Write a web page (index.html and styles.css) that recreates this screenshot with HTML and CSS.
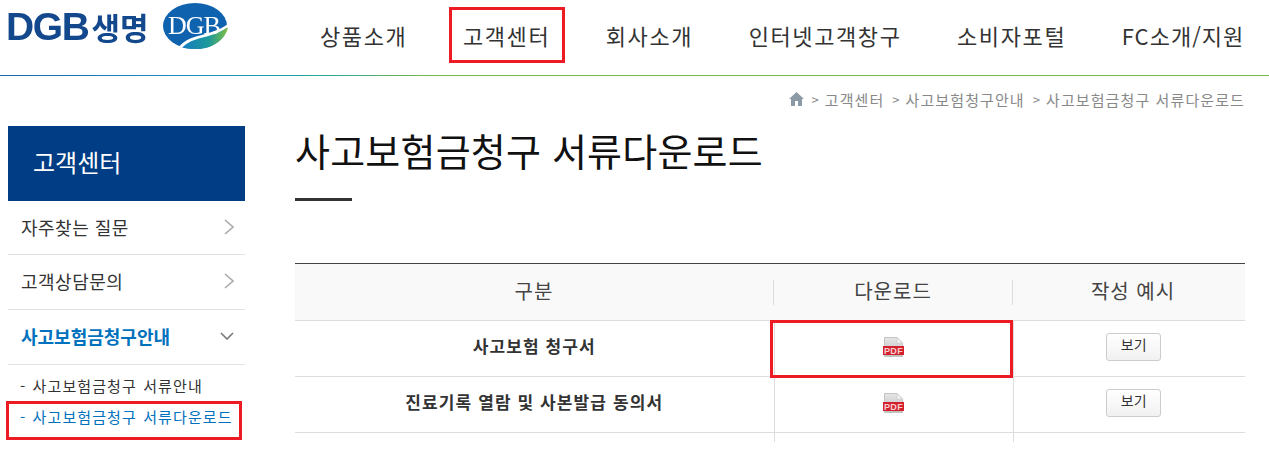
FILE: index.html
```html
<!DOCTYPE html>
<html lang="ko">
<head>
  <meta charset="UTF-8">
  <title>사고보험금청구 서류다운로드</title>
  <link rel="stylesheet" href="styles.css">
</head>
<body>
  <header class="header">
    <div class="logo">
      <span class="logo-text">DGB<span class="logo-kr">생명</span></span>
      <svg class="logo-mark" width="67" height="47" viewBox="0 0 67 47">
        <defs>
          <linearGradient id="swoosh" x1="0" y1="0" x2="1" y2="0">
            <stop offset="0" stop-color="#1379c4"/>
            <stop offset="0.6" stop-color="#1d9a9a"/>
            <stop offset="1" stop-color="#7fbf3f"/>
          </linearGradient>
        </defs>
        <ellipse cx="33" cy="23" rx="32" ry="23" fill="#0f62ae"/>
        <path d="M18 44 C30 31 50 36 66 24 C64 36 50 47 33 46 C27 46 22 45 18 44 Z" fill="url(#swoosh)"/>
        <path d="M17 44 C28 30 48 34 66 21 L66 24 C50 36 30 33 20 45 Z" fill="#fff"/>
        <text x="32" y="31" text-anchor="middle" class="logo-mark-text">DGB</text>
      </svg>
    </div>
    <nav class="nav">
      <a href="#">상품소개</a>
      <a href="#" class="marked">고객센터</a>
      <a href="#">회사소개</a>
      <a href="#">인터넷고객창구</a>
      <a href="#">소비자포털</a>
      <a href="#" class="fc">FC소개/지원</a>
    </nav>
  </header>
  <div class="header-line"></div>

  <div class="breadcrumb">
    <svg width="15" height="14" viewBox="0 0 15 14">
      <path d="M7.5 0 L15 7 L13 7 L13 14 L9 14 L9 9 L6 9 L6 14 L2 14 L2 7 L0 7 Z" fill="#8c9aa6"/>
    </svg>
    <span class="sep">&gt;</span><span>고객센터</span>
    <span class="sep">&gt;</span><span>사고보험청구안내</span>
    <span class="sep">&gt;</span><span>사고보험금청구 서류다운로드</span>
  </div>

  <div class="page">
    <aside class="sidebar">
      <h2 class="side-title">고객센터</h2>
      <ul class="side-menu">
        <li>
          <a href="#">자주찾는 질문</a>
          <svg width="10" height="16" viewBox="0 0 10 16"><path d="M1 1 L9 8 L1 15" class="chev"/></svg>
        </li>
        <li>
          <a href="#">고객상담문의</a>
          <svg width="10" height="16" viewBox="0 0 10 16"><path d="M1 1 L9 8 L1 15" class="chev"/></svg>
        </li>
        <li class="open">
          <a href="#">사고보험금청구안내</a>
          <svg width="14" height="8" viewBox="0 0 14 8"><path d="M1 1 L7 7 L13 1" class="chev dark"/></svg>
        </li>
      </ul>
      <ul class="side-sub">
        <li><a href="#">- 사고보험금청구 서류안내</a></li>
        <li class="current"><a href="#">- 사고보험금청구 서류다운로드</a></li>
      </ul>
    </aside>

    <main class="content">
      <h1 class="title">사고보험금청구 서류다운로드</h1>
      <div class="title-rule"></div>
      <table class="doc-table">
        <thead>
          <tr>
            <th class="col-name"><span>구분</span></th>
            <th class="col-down"><span>다운로드</span></th>
            <th class="col-sample"><span>작성 예시</span></th>
          </tr>
        </thead>
        <tbody>
          <tr>
            <td class="doc-name">사고보험 청구서</td>
            <td class="cell-down marked">
              <svg class="pdf" width="21" height="20" viewBox="0 0 21 20">
                <defs>
                  <linearGradient id="page" x1="0" y1="0" x2="0" y2="1">
                    <stop offset="0" stop-color="#e6e6e6"/>
                    <stop offset="1" stop-color="#bdbdbd"/>
                  </linearGradient>
                </defs>
                <path d="M1.5 0.5 H14 L19.5 6 V19.5 H1.5 Z" fill="url(#page)" stroke="#c4c4c4"/>
                <path d="M14 0.5 L19.5 6 H14 Z" fill="#f7f7f7" stroke="#d0d0d0"/>
                <rect y="9" width="21" height="9" fill="#d3202e"/>
                <text x="10.5" y="16.6" text-anchor="middle" class="pdf-text">PDF</text>
              </svg>
            </td>
            <td class="cell-sample"><button class="btn">보기</button></td>
          </tr>
          <tr>
            <td class="doc-name">진료기록 열람 및 사본발급 동의서</td>
            <td class="cell-down">
              <svg class="pdf" width="21" height="20" viewBox="0 0 21 20">
                <path d="M1.5 0.5 H14 L19.5 6 V19.5 H1.5 Z" fill="url(#page)" stroke="#c4c4c4"/>
                <path d="M14 0.5 L19.5 6 H14 Z" fill="#f7f7f7" stroke="#d0d0d0"/>
                <rect y="9" width="21" height="9" fill="#d3202e"/>
                <text x="10.5" y="16.6" text-anchor="middle" class="pdf-text">PDF</text>
              </svg>
            </td>
            <td class="cell-sample"><button class="btn">보기</button></td>
          </tr>
          <tr class="tail">
            <td></td>
            <td class="cell-down"></td>
            <td></td>
          </tr>
        </tbody>
      </table>
    </main>
  </div>
</body>
</html>
```

FILE: styles.css
```css
* {
  box-sizing: border-box;
}

html, body {
  height: 451px;
  overflow: hidden;
}

body {
  margin: 0;
  background: #fff;
  color: #333;
  font-family: "Noto Sans CJK KR", "Liberation Sans", sans-serif;
}

a {
  color: inherit;
  text-decoration: none;
}

ul {
  list-style: none;
  margin: 0;
  padding: 0;
}

/* header */
.header {
  display: flex;
  height: 75px;
}

.logo {
  display: flex;
  align-items: flex-start;
  width: 312px;
  flex: none;
  margin-right: 8px;
  padding: 3px 0 0 6px;
  filter: blur(0.4px);
}

.logo-text {
  width: 156px;
  color: #14488c;
  font-family: "Liberation Sans", sans-serif;
  font-size: 39px;
  line-height: 48px;
  font-weight: 700;
  letter-spacing: -1.4px;
  white-space: nowrap;
}

.logo-kr {
  margin-left: 3px;
  font-family: "Noto Sans CJK KR", sans-serif;
  font-size: 31px;
  font-weight: 700;
  letter-spacing: 0;
}

.logo-mark-text {
  fill: #fff;
  font-family: "Liberation Serif", serif;
  font-size: 26px;
  letter-spacing: -1px;
}

.nav {
  display: flex;
  gap: 55.5px;
  align-items: center;
  height: 69px;
}

.nav a {
  position: relative;
  color: #333;
  font-size: 22px;
  letter-spacing: 1.6px;
  white-space: nowrap;
}

.nav a.fc {
  letter-spacing: 1px;
}

.nav a.marked::after {
  content: "";
  position: absolute;
  left: -14px;
  right: -15px;
  top: -12px;
  bottom: -12px;
  border: 3px solid #ed1c24;
}

.header-line {
  height: 1px;
  background: linear-gradient(to right, #1a66ad, #1b8ec4 15%, #22a59c 25%, #7ab648 34%, #7ab648);
}

.breadcrumb {
  display: flex;
  justify-content: flex-end;
  align-items: center;
  gap: 6px;
  height: 18px;
  margin-top: 14px;
  padding-right: 24px;
  color: #888;
  font-size: 15px;
  letter-spacing: 1.1px;
}

.breadcrumb .sep {
  margin-left: 2px;
  font-size: 13px;
  letter-spacing: 0;
}

/* layout */
.page {
  display: flex;
  align-items: flex-start;
  margin-top: 18px;
  padding-left: 8px;
}

/* left menu */
.sidebar {
  width: 237px;
  flex: none;
}

.side-title {
  height: 75px;
  margin: 0;
  padding-left: 25px;
  background: #003d84;
  color: #fff;
  font-size: 24px;
  font-weight: 400;
  line-height: 71px;
}

.side-menu li {
  display: flex;
  justify-content: space-between;
  align-items: center;
  height: 55px;
  padding: 0 11px 2px 13px;
  border-bottom: 1px solid #e2e2e2;
  font-size: 18px;
  letter-spacing: 0.5px;
}

.side-menu li:first-child {
  height: 54px;
}

.side-menu li.open {
  color: #0071bc;
  font-weight: 700;
  letter-spacing: 0;
}

.chev {
  fill: none;
  stroke: #aaa;
  stroke-width: 1.6;
}

.chev.dark {
  stroke: #777;
}

.side-sub {
  padding-top: 5px;
}

.side-sub li {
  height: 31px;
  padding-left: 12px;
  font-size: 15px;
  line-height: 31px;
  letter-spacing: 1.1px;
  word-spacing: 1px;
  white-space: nowrap;
}

.side-sub li.current {
  position: relative;
  color: #0071bc;
}

.side-sub li.current::after {
  content: "";
  position: absolute;
  left: -2px;
  right: 3px;
  top: 0;
  height: 33px;
  border: 3px solid #ed1c24;
}

/* content */
.content {
  width: 950px;
  margin-left: 50px;
}

.title {
  margin: 0;
  color: #111;
  font-size: 38px;
  font-weight: 400;
  line-height: 48px;
  letter-spacing: 0.2px;
}

.title-rule {
  width: 57px;
  height: 3px;
  margin-top: 24px;
  background: #333;
}

.doc-table {
  width: 950px;
  margin-top: 62px;
  border-collapse: collapse;
  table-layout: fixed;
  border-top: 1px solid #444;
}

.col-name {
  width: 479px;
}

.col-down {
  width: 239px;
}

.doc-table th {
  height: 57px;
  padding: 0;
  background: #f9f9f9;
  border-bottom: 1px solid #ddd;
  color: #444;
  font-size: 20px;
  font-weight: 400;
  letter-spacing: 1px;
}

.doc-table th span {
  display: block;
  height: 25px;
  line-height: 21px;
  border-right: 1px solid #ddd;
}

.doc-table th.col-sample span {
  padding-left: 8px;
  border-right: 0;
}

.doc-table td {
  height: 56px;
  padding: 0 0 4px;
  border-bottom: 1px solid #ddd;
  text-align: center;
  vertical-align: middle;
}

.doc-table td.doc-name {
  padding-bottom: 6px;
}

.doc-table td.cell-sample {
  padding-left: 9px;
}

.doc-name {
  font-size: 17px;
  font-weight: 700;
  letter-spacing: 1.1px;
  color: #333;
}

.cell-down {
  position: relative;
  border-left: 1px solid #ddd;
  border-right: 1px solid #ddd;
}

.cell-down.marked::after {
  content: "";
  position: absolute;
  left: -5px;
  right: 0;
  top: -1px;
  bottom: -2px;
  border: 3px solid #ed1c24;
}

.pdf {
  display: block;
  margin: 0 auto;
}

.pdf-text {
  fill: #f8d0d0;
  font-family: "Liberation Sans", sans-serif;
  font-size: 9px;
  font-weight: 700;
  letter-spacing: 0.4px;
}

.btn {
  display: block;
  width: 55px;
  height: 28px;
  margin: 0 auto;
  padding: 0 0 7px;
  background: linear-gradient(to bottom, #fff, #f1f1f1);
  border: 1px solid #ccc;
  border-radius: 3px;
  color: #333;
  font-family: inherit;
  font-size: 14px;
}

.doc-table tr.tail td {
  height: 9px;
  padding: 0;
  border-bottom: 0;
}
```
